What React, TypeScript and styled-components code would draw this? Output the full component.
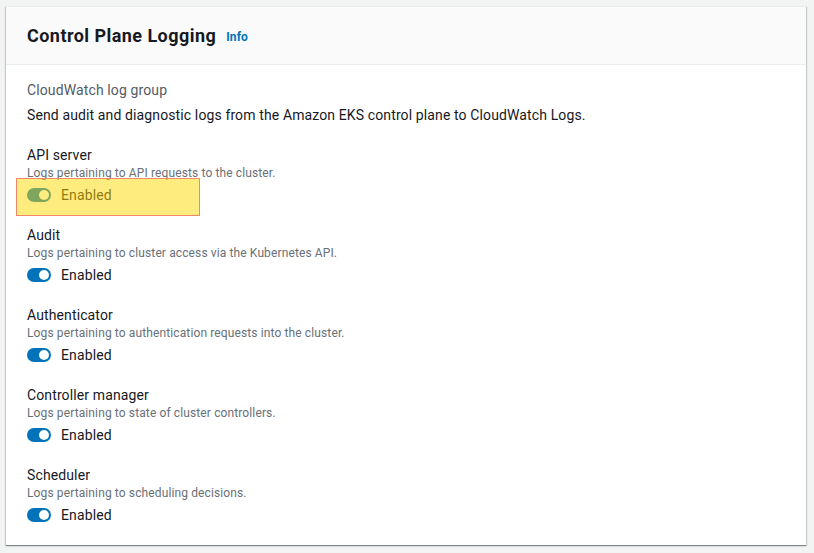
import React from "react";
import styled, { createGlobalStyle } from "styled-components";

const Global = createGlobalStyle`
  html, body { margin: 0; padding: 0; background: #f2f3f3; }
  body { font-family: Roboto, "Liberation Sans", Arial, sans-serif; letter-spacing: 0.12px; }
`;

const Page = styled.div`
  padding: 6px 0 0 6px;
  width: 814px;
  height: 553px;
  box-sizing: border-box;
`;

const Card = styled.section`
  width: 800px;
  height: 539px;
  box-sizing: border-box;
  background: #fff;
  border-top: 1px solid #eaeded;
  box-shadow: 0 1px 1px 0 rgba(0, 28, 36, 0.3), 1px 1px 1px 0 rgba(0, 28, 36, 0.15),
    -1px 1px 1px 0 rgba(0, 28, 36, 0.15);
  display: flex;
  flex-direction: column;
`;

const Header = styled.header`
  height: 58px;
  box-sizing: border-box;
  background: #fafafa;
  border-bottom: 1px solid #eaeded;
  display: flex;
  align-items: center;
  padding: 0 20px 0 21px;
  gap: 10px;
`;

const Title = styled.h2`
  margin: 0;
  font-size: 18px;
  font-weight: 700;
  letter-spacing: 0.45px;
  color: #16191f;
  line-height: 24px;
`;

const InfoLink = styled.a`
  font-size: 12px;
  font-weight: 700;
  color: #0073bb;
  text-decoration: none;
  margin-top: 3px;
`;

const Body = styled.div`
  padding: 15px 20px 20px 21px;
  display: flex;
  flex-direction: column;
  gap: 20px;
`;

const Intro = styled.div`
  display: flex;
  flex-direction: column;
  gap: 5px;
`;

const GroupLabel = styled.div`
  font-size: 14px;
  line-height: 20px;
  color: #545b64;
`;

const IntroText = styled.div`
  font-size: 14px;
  line-height: 20px;
  color: #16191f;
`;

const Field = styled.div`
  display: flex;
  flex-direction: column;
`;

const Label = styled.div`
  font-size: 14px;
  line-height: 20px;
  color: #16191f;
`;

const Desc = styled.div`
  font-size: 12px;
  line-height: 16px;
  color: #687078;
`;

const ToggleRow = styled.div`
  margin-top: 4px;
  height: 20px;
  display: flex;
  align-items: center;
  gap: 10px;
  position: relative;
`;

const Track = styled.span`
  width: 24px;
  height: 14px;
  border-radius: 7px;
  background: #0073bb;
  position: relative;
  display: inline-block;
  &::after {
    content: "";
    position: absolute;
    top: 2px;
    right: 2px;
    width: 10px;
    height: 10px;
    border-radius: 50%;
    background: #fff;
  }
`;

const ToggleText = styled.span`
  font-size: 14px;
  color: #16191f;
`;

const Highlight = styled.span`
  position: absolute;
  left: -11px;
  top: -7px;
  width: 184px;
  height: 38px;
  box-sizing: border-box;
  background: rgba(255, 218, 0, 0.5);
  border: 1.5px solid rgba(240, 110, 100, 0.8);
  pointer-events: none;
`;

const fields = [
  { label: "API server", desc: "Logs pertaining to API requests to the cluster.", hl: true },
  { label: "Audit", desc: "Logs pertaining to cluster access via the Kubernetes API." },
  { label: "Authenticator", desc: "Logs pertaining to authentication requests into the cluster." },
  { label: "Controller manager", desc: "Logs pertaining to state of cluster controllers." },
  { label: "Scheduler", desc: "Logs pertaining to scheduling decisions." },
];

export default function App() {
  return (
    <Page>
      <Global />
      <Card>
        <Header>
          <Title>Control Plane Logging</Title>
          <InfoLink href="#">Info</InfoLink>
        </Header>
        <Body>
          <Intro>
            <GroupLabel>CloudWatch log group</GroupLabel>
            <IntroText>
              Send audit and diagnostic logs from the Amazon EKS control plane to CloudWatch Logs.
            </IntroText>
          </Intro>
          {fields.map((f) => (
            <Field key={f.label}>
              <Label>{f.label}</Label>
              <Desc>{f.desc}</Desc>
              <ToggleRow>
                <Track />
                <ToggleText>Enabled</ToggleText>
                {f.hl && <Highlight />}
              </ToggleRow>
            </Field>
          ))}
        </Body>
      </Card>
    </Page>
  );
}
